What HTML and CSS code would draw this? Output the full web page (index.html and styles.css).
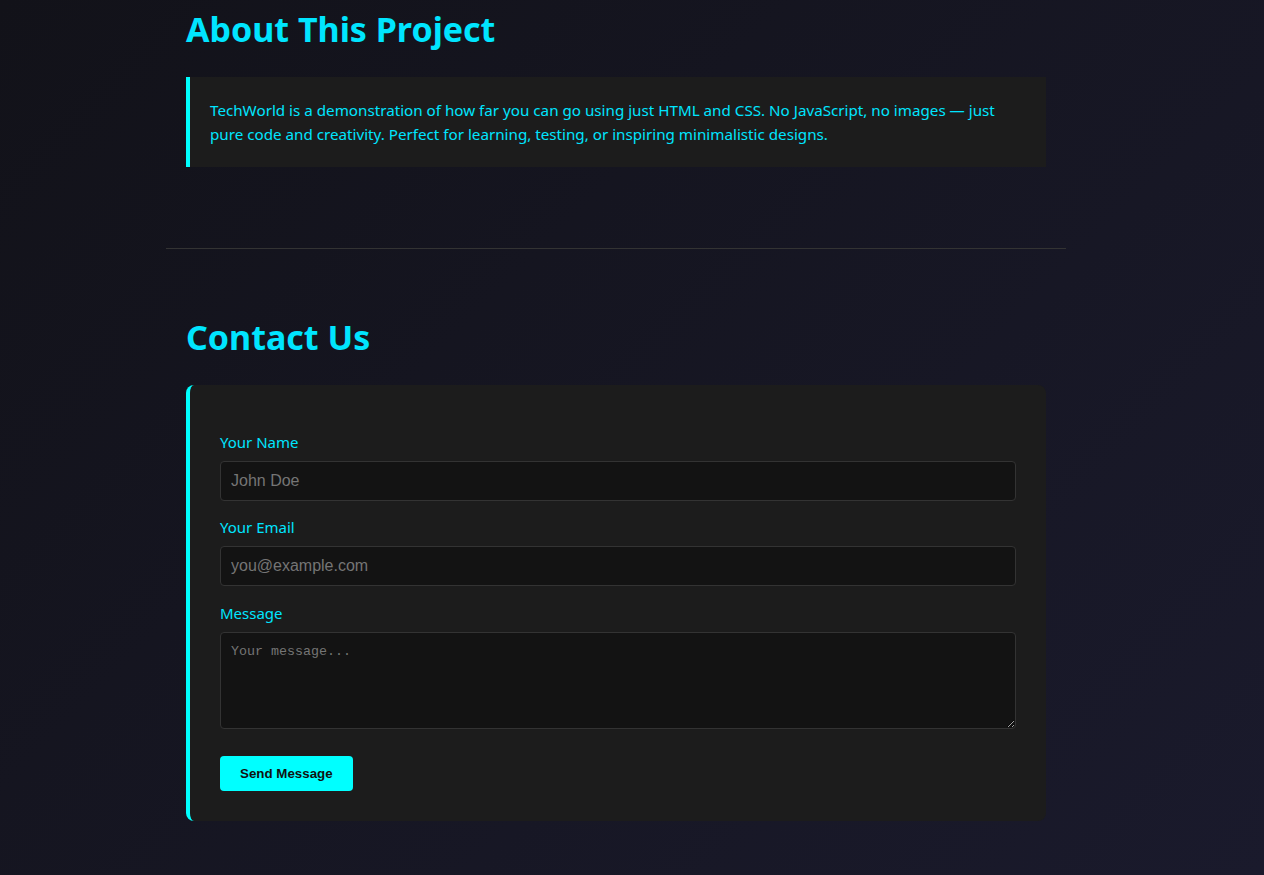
FILE: index.html
```html
<!DOCTYPE html>
<html lang="en">
<head>
<meta charset="utf-8">
<title>TechWorld</title>
<link rel="stylesheet" href="styles.css">
</head>
<body>
<main class="page">
  <section class="section about">
    <h2 class="title">About This Project</h2>
    <blockquote class="quote">TechWorld is a demonstration of how far you can go using just HTML and CSS. No JavaScript, no images — just pure code and creativity. Perfect for learning, testing, or inspiring minimalistic designs.</blockquote>
  </section>
  <hr class="divider">
  <section class="section contact">
    <h2 class="title">Contact Us</h2>
    <form class="card">
      <label class="label" for="name">Your Name</label>
      <input class="field" id="name" type="text" placeholder="John Doe">
      <label class="label" for="email">Your Email</label>
      <input class="field" id="email" type="email" placeholder="you@example.com">
      <label class="label label-msg" for="msg">Message</label>
      <textarea class="field area" id="msg" placeholder="Your message..."></textarea>
      <button class="send" type="button">Send Message</button>
    </form>
  </section>
</main>
</body>
</html>
```
FILE: styles.css
```css
html, body {
  margin: 0;
  height: 100%;
}
body {
  background: linear-gradient(135deg, #121219 0%, #1a1a2c 100%);
  font-family: "Noto Sans", "Open Sans", sans-serif;
  color: #00e5ff;
  padding-right: 32px;
  box-sizing: border-box;
  overflow: hidden;
}
.page {
  width: 900px;
  margin: 0 auto;
}
.section {
  padding: 0 20px;
}
.about {
  padding-top: 8px;
  padding-bottom: 81px;
}
.contact {
  padding-top: 67px;
}
.title {
  font-size: 34px;
  line-height: 43px;
  font-weight: 700;
  margin: 0 0 26px;
  color: #00e5ff;
}
.quote {
  margin: 0;
  background: #1c1c1c;
  border-left: 4px solid #00ffff;
  padding: 21px 20px;
  font-size: 15.2px;
  line-height: 24px;
  color: #00e5ff;
}
.divider {
  border: 0;
  border-top: 1px solid #333;
  margin: 0;
}
.card {
  background: #1c1c1c;
  border-left: 4px solid #00ffff;
  border-radius: 8px;
  padding: 46px 30px 30px;
  display: flex;
  flex-direction: column;
  align-items: flex-start;
}
.label {
  font-size: 15px;
  line-height: 22px;
  margin-bottom: 8px;
  color: #00e5ff;
}
.label-msg {
  margin-top: 1px;
}
.field {
  box-sizing: border-box;
  width: 100%;
  height: 40px;
  background: #131313;
  border: 1px solid #333;
  border-radius: 4px;
  padding: 10px;
  margin: 0 0 15px;
  font-family: "Liberation Sans", Arial, sans-serif;
  font-size: 16px;
  color: #ddd;
}
.field::placeholder {
  color: #757575;
}
.area {
  height: 97px;
  padding-top: 11px;
  font-family: "Liberation Mono", monospace;
  font-size: 13.33px;
  margin-bottom: 27px;
  resize: vertical;
}
.send {
  background: #00ffff;
  color: #111;
  border: 0;
  border-radius: 4px;
  padding: 10px 20px;
  font-family: "Liberation Sans", Arial, sans-serif;
  font-weight: 700;
  font-size: 13.33px;
  line-height: 15px;
  cursor: pointer;
}
```
